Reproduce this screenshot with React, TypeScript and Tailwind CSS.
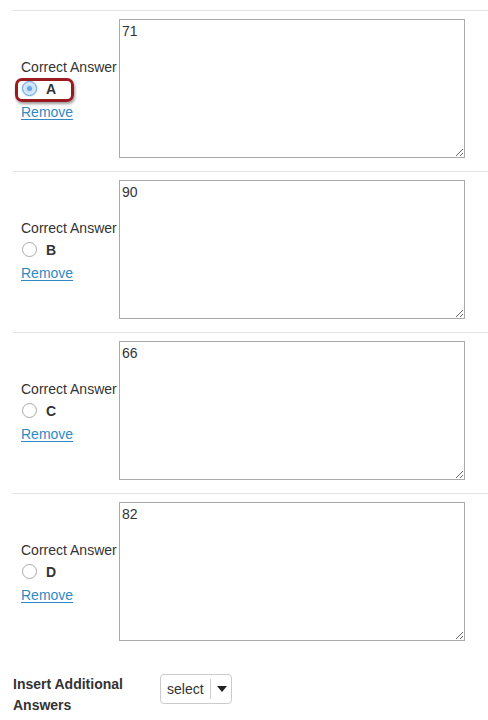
import React from "react";

const rows = [
  { letter: "A", value: "71", selected: true },
  { letter: "B", value: "90", selected: false },
  { letter: "C", value: "66", selected: false },
  { letter: "D", value: "82", selected: false },
];

function Radio({ selected }: { selected: boolean }) {
  if (selected) {
    return (
      <span className="inline-flex h-[15px] w-[15px] items-center justify-center rounded-full border border-[#5f9fdc] bg-[radial-gradient(circle,#a9cff3_0%,#d8eafb_55%,#bcd8f4_100%)] shadow-[0_0_2px_#8fc0ef]">
        <span className="h-[5px] w-[5px] rounded-full bg-[#6aa7e6]" />
      </span>
    );
  }
  return <span className="inline-block h-[15px] w-[15px] rounded-full border border-[#a9a9a9] bg-white" />;
}

export default function App() {
  return (
    <div className="bg-white pl-[13px] pt-[10px] text-[14px] text-[#333] [font-family:'Liberation_Sans',Arial,sans-serif]">
      {rows.map((r, i) => (
        <div
          key={r.letter}
          className={`flex border-t border-[#e3e3e3] pt-[8px] ${i === rows.length - 1 ? "pb-[33px]" : "pb-[13px]"}`}
        >
          <div className="relative flex w-[106px] flex-col pl-[8px] pt-[38px]">
            <div className="w-[98px] overflow-hidden whitespace-nowrap leading-[20px]">Correct Answer</div>
            <div className="flex h-[22px] items-center pl-[1px] pt-[1px]">
              <Radio selected={r.selected} />
              <span className="ml-[9px] font-bold leading-[22px]">{r.letter}</span>
            </div>
            <a href="#" className="mt-[2px] w-fit leading-[22px] text-[#2f8ac4] underline underline-offset-2">
              Remove
            </a>
            {r.selected && (
              <span className="pointer-events-none absolute left-[2px] top-[59px] h-[24px] w-[59px] rounded-[7px] border-[3px] border-[#9a1a1f] shadow-[1px_2px_3px_rgba(0,0,0,0.4)]" />
            )}
          </div>
          <textarea
            defaultValue={r.value}
            className="h-[139px] w-[346px] border border-[#a9a9a9] px-[2px] py-[2px] text-[14px] leading-[18px] text-[#333] outline-none [font-family:'Liberation_Sans',Arial,sans-serif]"
          />
        </div>
      ))}
      <div className="flex items-start">
        <div className="w-[147px] font-bold leading-[21px]">Insert Additional Answers</div>
        <div className="flex h-[30px] w-[72px] items-center rounded-[4px] border border-[#cccccc] bg-white">
          <span className="pl-[6px] text-[14px] leading-[20px]">select</span>
          <span className="ml-[6px] h-[20px] w-px bg-[#cccccc]" />
          <svg width="10" height="6" viewBox="0 0 10 6" className="ml-[6px]">
            <path d="M0 0 L10 0 L5 6 Z" fill="#222" />
          </svg>
        </div>
      </div>
    </div>
  );
}
